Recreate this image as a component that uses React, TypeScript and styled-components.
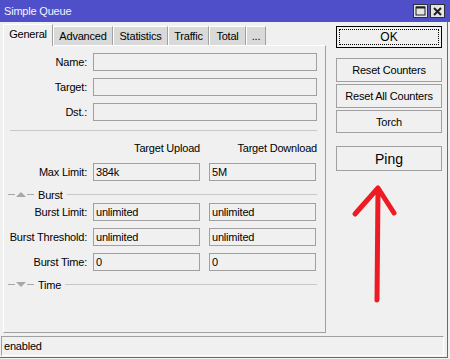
import styled, { createGlobalStyle } from "styled-components";

const GlobalStyle = createGlobalStyle`
    html, body {
        margin: 0;
        padding: 0;
        background: #f0f0f0;
    }
    body {
        font-family: "Liberation Sans", Arial, sans-serif;
        font-size: 11px;
        letter-spacing: -0.2px;
        color: #000;
    }
`;

const Window = styled.div`
    position: relative;
    width: 450px;
    height: 359px;
    background: #f0f0f0;
    overflow: hidden;
`;

const TitleBar = styled.div`
    height: 22px;
    background: #4f4fc9;
    display: flex;
    align-items: center;
    justify-content: space-between;
    padding: 0 5px 0 4px;
    box-sizing: border-box;
`;

const Title = styled.span`
    color: #f4f4ff;
    font-size: 11px;
`;

const Controls = styled.div`
    display: flex;
    gap: 2px;
`;

const ControlBtn = styled.div`
    width: 15px;
    height: 14px;
    box-sizing: border-box;
    background: #e4e4e4;
    border: 1px solid #303030;
    display: flex;
    align-items: center;
    justify-content: center;
`;

const Body = styled.div`
    width: 448px;
    height: 336px;
    box-sizing: border-box;
    border-right: 1px solid #6a6a6a;
    border-bottom: 1px solid #6a6a6a;
    display: flex;
    flex-direction: column;
`;

const Main = styled.div`
    display: flex;
    gap: 10px;
    padding-left: 3px;
    height: 312px;
`;

const TabArea = styled.div`
    width: 323px;
    display: flex;
    flex-direction: column;
`;

const TabStrip = styled.div`
    height: 23px;
    display: flex;
    align-items: flex-end;
`;

const Tab = styled.div<{ $w: number; $active?: boolean }>`
    width: ${(p) => p.$w}px;
    height: ${(p) => (p.$active ? 22 : 19)}px;
    box-sizing: border-box;
    display: flex;
    align-items: center;
    justify-content: center;
    background: ${(p) => (p.$active ? "#f0f0f0" : "#d9d9d9")};
    border-top: 1px solid #fff;
    border-left: 1px solid #fff;
    border-right: 1px solid #a0a0a0;
    padding-bottom: ${(p) => (p.$active ? 3 : 1)}px;
    margin-bottom: ${(p) => (p.$active ? -1 : 0)}px;
    position: relative;
    z-index: ${(p) => (p.$active ? 1 : 0)};
`;

const Panel = styled.div`
    height: 288px;
    box-sizing: border-box;
    border-top: 1px solid #fff;
    border-left: 1px solid #fff;
    border-right: 1px solid #a0a0a0;
    border-bottom: 1px solid #a0a0a0;
    padding-top: 7px;
    display: flex;
    flex-direction: column;
`;

const FieldRow = styled.div`
    display: grid;
    grid-template-columns: 83px 113px 117px;
    align-items: center;
    height: 18px;
    margin-bottom: 7px;
`;

const Label = styled.div`
    text-align: right;
    white-space: nowrap;
`;

const Field = styled.div<{ $wide?: boolean; $col: number }>`
    grid-column: ${(p) => (p.$wide ? "2 / 4" : p.$col)};
    margin-left: ${(p) => (p.$col === 3 ? 9 : 6)}px;
    width: ${(p) => (p.$wide ? 224 : 107)}px;
    height: 18px;
    box-sizing: border-box;
    border: 1px solid #a0a0a0;
    background: #f0f0f0;
    padding: 0 2px;
    display: flex;
    align-items: center;
    white-space: nowrap;
`;

const Divider = styled.div`
    height: 1px;
    background: #c8c8c8;
    margin: 2px 0 9px 6px;
    width: 307px;
`;

const HeadRow = styled.div`
    display: grid;
    grid-template-columns: 83px 113px 117px;
    height: 16px;
    align-items: center;
    margin-bottom: 7px;
`;

const HeadCell = styled.div`
    text-align: right;
`;

const Group = styled.div<{ $mb: number }>`
    display: flex;
    align-items: center;
    height: 13px;
    margin-bottom: ${(p) => p.$mb}px;
    padding-left: 4px;
    width: 309px;
`;

const GroupName = styled.span`
    margin: 0 4px 0 3px;
`;

const GroupLine = styled.div`
    flex: 1;
    height: 1px;
    background: #c8c8c8;
`;

const SideColumn = styled.div`
    width: 106px;
    padding-top: 4px;
    display: flex;
    flex-direction: column;
`;

const Button = styled.div<{ $h: number; $mt: number; $size?: number }>`
    height: ${(p) => p.$h}px;
    margin-top: ${(p) => p.$mt}px;
    box-sizing: border-box;
    border: 1px solid #a0a0a0;
    background: #f0f0f0;
    display: flex;
    align-items: center;
    justify-content: center;
    font-size: ${(p) => p.$size ?? 11}px;
    letter-spacing: ${(p) => (p.$size ? 0 : -0.2)}px;
`;

const DefaultButton = styled(Button)`
    border: 1px solid #000;
    position: relative;
    &::after {
        content: "";
        position: absolute;
        inset: 2px;
        border: 1px dotted #000;
    }
`;

const StatusBar = styled.div`
    margin: 2px 3px 0 1px;
    height: 20px;
    box-sizing: border-box;
    border-top: 1px solid #a0a0a0;
    border-left: 1px solid #a0a0a0;
    border-right: 1px solid #fff;
    border-bottom: 1px solid #fff;
    display: flex;
    align-items: center;
    padding-left: 2px;
`;

const Arrow = styled.svg`
    position: absolute;
    left: 0;
    top: 0;
    pointer-events: none;
`;

function Toggle({ up }: { up: boolean }) {
    return (
        <svg width="27" height="9" viewBox="0 0 27 9">
            <line x1="0" y1="4.5" x2="7" y2="4.5" stroke="#a8a8a8" />
            <line x1="19" y1="4.5" x2="26" y2="4.5" stroke="#a8a8a8" />
            {up ? (
                <polygon points="8,7 18,7 13,2" fill="#a8a8a8" />
            ) : (
                <polygon points="8,2 18,2 13,7" fill="#a8a8a8" />
            )}
        </svg>
    );
}

const tabs = [
    { name: "General", w: 50 },
    { name: "Advanced", w: 60 },
    { name: "Statistics", w: 55 },
    { name: "Traffic", w: 41 },
    { name: "Total", w: 37 },
    { name: "...", w: 20 },
];

function App() {
    return (
        <Window>
            <GlobalStyle />
            <TitleBar>
                <Title>Simple Queue</Title>
                <Controls>
                    <ControlBtn>
                        <svg width="11" height="10" viewBox="0 0 11 10">
                            <rect x="1" y="1" width="9" height="8" fill="none" stroke="#202020" />
                            <line x1="1" y1="1.5" x2="10" y2="1.5" stroke="#202020" strokeWidth="2" />
                        </svg>
                    </ControlBtn>
                    <ControlBtn>
                        <svg width="9" height="9" viewBox="0 0 9 9">
                            <path d="M1 1 L8 8 M8 1 L1 8" stroke="#202020" strokeWidth="2" />
                        </svg>
                    </ControlBtn>
                </Controls>
            </TitleBar>
            <Body>
                <Main>
                    <TabArea>
                        <TabStrip>
                            {tabs.map((t, i) => (
                                <Tab key={t.name} $w={t.w} $active={i === 0}>
                                    {t.name}
                                </Tab>
                            ))}
                        </TabStrip>
                        <Panel>
                            <FieldRow>
                                <Label>Name:</Label>
                                <Field $wide $col={2} />
                            </FieldRow>
                            <FieldRow>
                                <Label>Target:</Label>
                                <Field $wide $col={2} />
                            </FieldRow>
                            <FieldRow>
                                <Label>Dst.:</Label>
                                <Field $wide $col={2} />
                            </FieldRow>
                            <Divider />
                            <HeadRow>
                                <span />
                                <HeadCell>Target Upload</HeadCell>
                                <HeadCell>Target Download</HeadCell>
                            </HeadRow>
                            <FieldRow>
                                <Label>Max Limit:</Label>
                                <Field $col={2}>384k</Field>
                                <Field $col={3}>5M</Field>
                            </FieldRow>
                            <Group $mb={2}>
                                <Toggle up />
                                <GroupName>Burst</GroupName>
                                <GroupLine />
                            </Group>
                            <FieldRow>
                                <Label>Burst Limit:</Label>
                                <Field $col={2}>unlimited</Field>
                                <Field $col={3}>unlimited</Field>
                            </FieldRow>
                            <FieldRow>
                                <Label>Burst Threshold:</Label>
                                <Field $col={2}>unlimited</Field>
                                <Field $col={3}>unlimited</Field>
                            </FieldRow>
                            <FieldRow>
                                <Label>Burst Time:</Label>
                                <Field $col={2}>0</Field>
                                <Field $col={3}>0</Field>
                            </FieldRow>
                            <Group $mb={0}>
                                <Toggle up={false} />
                                <GroupName>Time</GroupName>
                                <GroupLine />
                            </Group>
                        </Panel>
                    </TabArea>
                    <SideColumn>
                        <DefaultButton $h={22} $mt={0} $size={12}>OK</DefaultButton>
                        <Button $h={24} $mt={10}>Reset Counters</Button>
                        <Button $h={24} $mt={2}>Reset All Counters</Button>
                        <Button $h={23} $mt={2}>Torch</Button>
                        <Button $h={25} $mt={13} $size={14}>Ping</Button>
                    </SideColumn>
                </Main>
                <StatusBar>enabled</StatusBar>
            </Body>
            <Arrow width="450" height="359" viewBox="0 0 450 359">
                <path
                    d="M377 300 L378 189 M355 214 L378 188 L394 213"
                    fill="none"
                    stroke="#ed1c24"
                    strokeWidth="5"
                    strokeLinecap="round"
                    strokeLinejoin="round"
                />
            </Arrow>
        </Window>
    );
}

export default App;
